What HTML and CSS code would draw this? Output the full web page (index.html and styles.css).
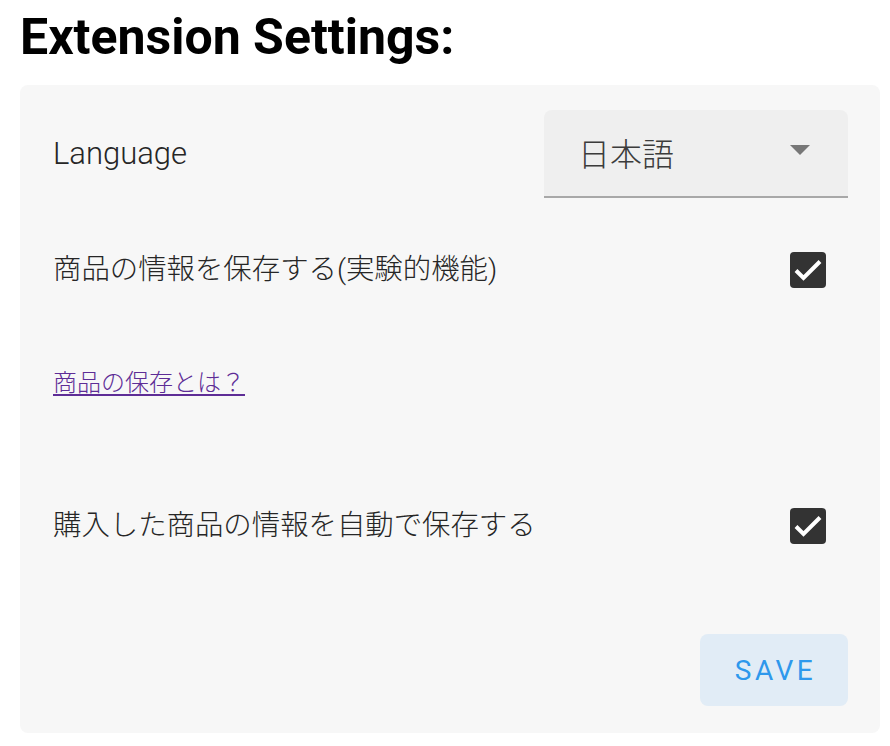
FILE: index.html
```html
<!DOCTYPE html>
<html lang="ja">
<head>
<meta charset="utf-8">
<title>Extension Settings</title>
<link rel="stylesheet" href="styles.css">
</head>
<body>
<main class="page">
  <h1 class="title">Extension Settings:</h1>
  <section class="card">
    <div class="row row-lang">
      <span class="label label-latin">Language</span>
      <div class="select">
        <span class="select-value">日本語</span>
        <svg class="select-arrow" width="20" height="10" viewBox="0 0 20 10"><path d="M0 0 L10 10 L20 0 Z" fill="#777"/></svg>
      </div>
    </div>
    <div class="row row-check">
      <span class="label">商品の情報を保存する(実験的機能)</span>
      <svg class="checkbox" width="36" height="36" viewBox="0 0 36 36"><rect x="0" y="0" width="36" height="36" rx="4" fill="#333"/><polyline points="6,18.5 13.5,26 30,9.5" fill="none" stroke="#fff" stroke-width="4"/></svg>
    </div>
    <a class="link" href="#">商品の保存とは？</a>
    <div class="row row-check row-auto">
      <span class="label">購入した商品の情報を自動で保存する</span>
      <svg class="checkbox" width="36" height="36" viewBox="0 0 36 36"><rect x="0" y="0" width="36" height="36" rx="4" fill="#333"/><polyline points="6,18.5 13.5,26 30,9.5" fill="none" stroke="#fff" stroke-width="4"/></svg>
    </div>
    <div class="actions">
      <button class="save" type="button">SAVE</button>
    </div>
  </section>
</main>
</body>
</html>
```
FILE: styles.css
```css
html, body {
  margin: 0;
  padding: 0;
  background: #ffffff;
}

.page {
  padding: 0 10px 0 20px;
  font-family: Roboto, "Noto Sans CJK JP", sans-serif;
}

.title {
  margin: 7px 0 18px;
  font-family: Roboto, "Noto Sans CJK JP", sans-serif;
  font-weight: 700;
  font-size: 50px;
  line-height: 60px;
  color: #000;
}

.card {
  background: #f7f7f7;
  border-radius: 8px;
  padding: 25px 32px 27px 33px;
  display: flex;
  flex-direction: column;
}

.row {
  display: flex;
  align-items: center;
  justify-content: space-between;
}

.label {
  font-size: 28.4px;
  font-weight: 300;
  line-height: 40px;
  color: #262626;
}

.label-latin {
  font-size: 31px;
}

.select {
  width: 304px;
  height: 86px;
  box-sizing: content-box;
  background: #efefef;
  border-radius: 8px 8px 0 0;
  border-bottom: 2px solid #a8a8a8;
  display: flex;
  align-items: center;
  justify-content: space-between;
  padding: 0;
}

.select-value {
  margin-left: 34px;
  margin-top: -2px;
  font-family: "Noto Sans CJK JP", sans-serif;
  font-size: 32px;
  font-weight: 300;
  color: #3c3c3c;
}

.select-arrow {
  margin-right: 38px;
  margin-top: -6px;
}

.row-check {
  height: 72px;
  margin-top: 36px;
}

.checkbox {
  margin-right: 22px;
  display: block;
}

.link {
  align-self: flex-start;
  margin-top: 59px;
  font-size: 24px;
  font-weight: 300;
  line-height: 36px;
  color: #5e2d96;
  text-decoration: underline;
  text-decoration-thickness: 2px;
  text-underline-offset: 3px;
}

.row-auto {
  margin-top: 89px;
}

.actions {
  display: flex;
  justify-content: flex-end;
  margin-top: 72px;
}

.save {
  width: 148px;
  height: 72px;
  border: none;
  border-radius: 8px;
  background: #e1ecf6;
  color: #2e98ec;
  font-family: Roboto, sans-serif;
  font-weight: 400;
  font-size: 28px;
  letter-spacing: 3.5px;
  padding: 0 0 0 3px;
  cursor: pointer;
}
```
